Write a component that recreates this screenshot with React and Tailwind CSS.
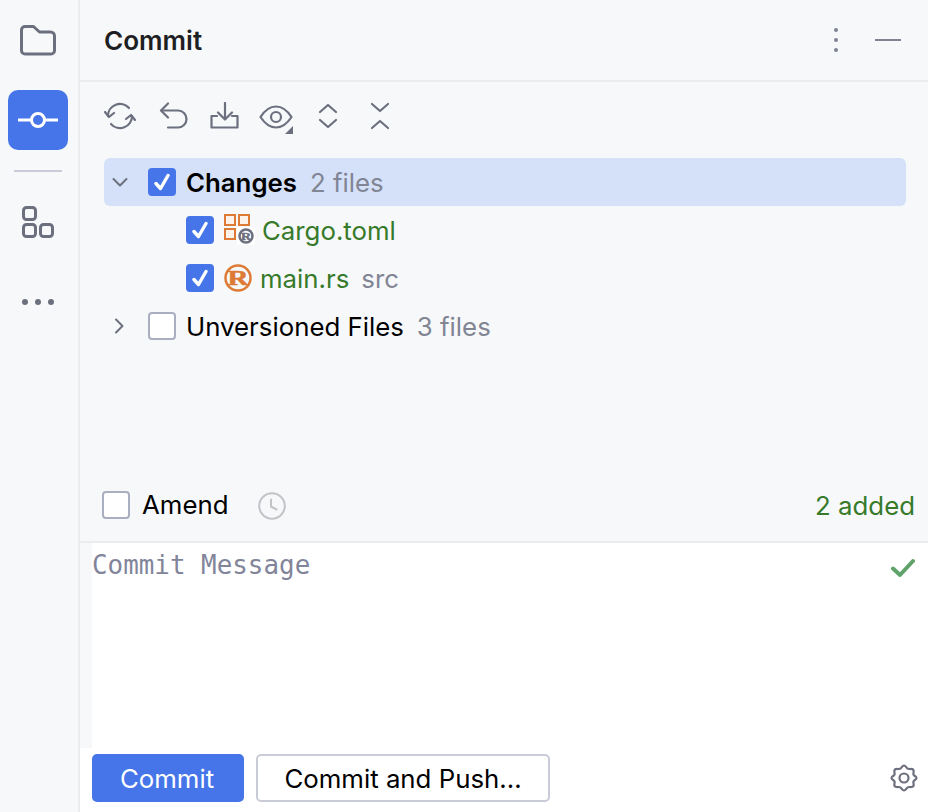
import { Fragment } from 'react'

const Svg = ({ w, h, className = '', children }) => (
  <svg width={w} height={h} viewBox={`0 0 ${w} ${h}`} fill="none" className={`block shrink-0 ${className}`}>
    {children}
  </svg>
)

// Left tool strip
const FolderIcon = () => (
  <Svg w={36} h={32}>
    <path d="M1.500 6a3.500 3.500 0 0 1 3.500-3.500h8.500l6 5.500h11a4 4 0 0 1 4 4v14.500a3.500 3.500 0 0 1-3.500 3.500H5a3.500 3.500 0 0 1-3.500-3.500z" stroke="#6c707e" strokeWidth="3" strokeLinejoin="round" />
  </Svg>
)

const CommitIcon = () => (
  <Svg w={40} h={20}>
    <path d="M0 10h13M27 10h13" stroke="#fff" strokeWidth="3" strokeLinecap="round" />
    <circle cx="20" cy="10" r="6.500" stroke="#fff" strokeWidth="3" />
  </Svg>
)

const PluginsIcon = () => (
  <Svg w={32} h={32}>
    <rect x="1.500" y="1.500" width="12" height="12" rx="3" stroke="#6c707e" strokeWidth="3" />
    <rect x="1.500" y="18.500" width="12" height="12" rx="3" stroke="#6c707e" strokeWidth="3" />
    <rect x="18.500" y="18.500" width="12" height="12" rx="3" stroke="#6c707e" strokeWidth="3" />
  </Svg>
)

// Toolbar
const RefreshIcon = () => (
  <Svg w={32} h={28}>
    <path d="M4 14a12 12 0 0 1 21-8M28 14a12 12 0 0 1-21 8" stroke="#6c707e" strokeWidth="2.200" strokeLinecap="round" />
    <path d="M1 10l4 5 5-4M31 18l-4-5-5 4" stroke="#6c707e" strokeWidth="2.200" strokeLinecap="round" strokeLinejoin="round" />
  </Svg>
)

const RollbackIcon = () => (
  <Svg w={30} h={28}>
    <path d="M9 1.500L2 8.500l7 7" stroke="#6c707e" strokeWidth="2.200" strokeLinecap="round" strokeLinejoin="round" />
    <path d="M2.500 8.500H19a8.500 8.500 0 0 1 0 17H9" stroke="#6c707e" strokeWidth="2.200" strokeLinecap="round" />
  </Svg>
)

const ShelveIcon = () => (
  <Svg w={30} h={28}>
    <path d="M15 1v16M8 10.500l7 7 7-7" stroke="#6c707e" strokeWidth="2.200" strokeLinecap="round" strokeLinejoin="round" />
    <path d="M7 14H1.500v11.500h26V14H22" stroke="#6c707e" strokeWidth="2.200" strokeLinecap="round" strokeLinejoin="round" />
  </Svg>
)

const EyeIcon = () => (
  <Svg w={36} h={34}>
    <path d="M1.500 14C6 7 11 3.500 17 3.500S28 7 32.500 14C28 21 23 24.500 17 24.500S6 21 1.500 14z" stroke="#6c707e" strokeWidth="2.200" strokeLinejoin="round" />
    <circle cx="17" cy="14" r="5" stroke="#6c707e" strokeWidth="2.200" />
    <path d="M26 31l8-8v8z" fill="#6c707e" />
  </Svg>
)

const ExpandIcon = () => (
  <Svg w={20} h={28}>
    <path d="M2 10l8-7 8 7M2 18l8 7 8-7" stroke="#6c707e" strokeWidth="2.200" strokeLinecap="round" strokeLinejoin="round" />
  </Svg>
)

const CollapseIcon = () => (
  <Svg w={20} h={28}>
    <path d="M2 2l8 7 8-7M2 26l8-7 8 7" stroke="#6c707e" strokeWidth="2.200" strokeLinecap="round" strokeLinejoin="round" />
  </Svg>
)

// Tree
const Chevron = ({ open }) => (
  <Svg w={16} h={16}>
    {open ? (
      <path d="M1.500 5l6.500 6.500L14.500 5" stroke="#6c707e" strokeWidth="2" strokeLinecap="round" strokeLinejoin="round" />
    ) : (
      <path d="M5 1.500l6.500 6.500L5 14.500" stroke="#6c707e" strokeWidth="2" strokeLinecap="round" strokeLinejoin="round" />
    )}
  </Svg>
)

const Checkbox = ({ checked }) =>
  checked ? (
    <span className="flex h-7 w-7 shrink-0 items-center justify-center rounded-[4px] bg-[#4575e8]">
      <Svg w={16} h={18}>
        <path d="M2 10.500l4.500 5L14 2.500" stroke="#fff" strokeWidth="3.400" strokeLinecap="round" strokeLinejoin="round" />
      </Svg>
    </span>
  ) : (
    <span className="block h-7 w-7 shrink-0 rounded-[4px] border-2 border-[#a9aec0] bg-white" />
  )

const RBadge = ({ cx, cy, r, color, bg, size, ring, width }) => (
  <>
    <circle cx={cx} cy={cy} r={r} fill={bg} stroke={color} strokeWidth={ring} />
    <text
      x={cx - width / 2}
      y={cy + size * 0.33}
      textLength={width}
      lengthAdjust="spacingAndGlyphs"
      fontFamily="'Liberation Serif', serif"
      fontWeight="700"
      fontSize={size}
      fill={color}
      stroke={color}
      strokeWidth="0.500"
    >
      R
    </text>
  </>
)

const CargoIcon = () => (
  <Svg w={32} h={32}>
    <rect x="1" y="1" width="10" height="10" fill="#fdf2e9" stroke="#dd7a35" strokeWidth="2" />
    <rect x="15" y="1" width="10" height="10" fill="#fdf2e9" stroke="#dd7a35" strokeWidth="2" />
    <rect x="1" y="15" width="10" height="10" fill="#fdf2e9" stroke="#dd7a35" strokeWidth="2" />
    <rect x="13" y="13" width="18" height="18" fill="#fff" />
    <RBadge cx={22} cy={22} r={6.500} color="#6c707e" bg="#fff" size={11} ring={2.500} width={10} />
  </Svg>
)

const RustIcon = () => (
  <Svg w={28} h={28}>
    <RBadge cx={14} cy={14} r={12.500} color="#dd7a35" bg="#f7f8fa" size={20} ring={2.500} width={21} />
  </Svg>
)

const ClockIcon = () => (
  <Svg w={28} h={28}>
    <circle cx="14" cy="14" r="12.800" stroke="#c2c3c7" strokeWidth="2" />
    <path d="M13 7.500v7l5.500 3" stroke="#c2c3c7" strokeWidth="2" strokeLinecap="round" strokeLinejoin="round" />
  </Svg>
)

const GearIcon = () => (
  <Svg w={28} h={28}>
    <path d="M14 1.500c1.800 0 2.300 2.700 4 3.300 1.700.7 4-.6 5.300.9 1 1.200-.3 3.300.2 5 .5 1.300 3 1.500 3 3.300s-2.500 2-3 3.300c-.5 1.700.8 3.800-.2 5-1.300 1.500-3.600.2-5.300.9-1.700.6-2.200 3.300-4 3.300s-2.300-2.700-4-3.300c-1.700-.7-4 .6-5.300-.9-1-1.200.3-3.300-.2-5-.5-1.300-3-1.500-3-3.300s2.500-2 3-3.300c.5-1.700-.8-3.800.2-5C6 4.200 8.300 5.500 10 4.800c1.700-.6 2.200-3.300 4-3.300z" stroke="#6c707e" strokeWidth="2.200" strokeLinejoin="round" />
    <circle cx="14" cy="14" r="4.500" stroke="#6c707e" strokeWidth="2.200" />
  </Svg>
)

const toolbarItems = [
  { Icon: RefreshIcon, className: 'ml-0' },
  { Icon: RollbackIcon, className: 'ml-[23px]' },
  { Icon: ShelveIcon, className: 'ml-[21px]' },
  { Icon: EyeIcon, className: 'ml-[19px] mt-[1px]' },
  { Icon: ExpandIcon, className: 'ml-[23px]' },
  { Icon: CollapseIcon, className: 'ml-[32px]' },
]

export default function App() {
  return (
    <div className="flex h-[812px] w-[928px] overflow-hidden bg-[#f7f8fa] font-['Inter',sans-serif] text-[25.800px] text-black">
      {/* Tool strip */}
      <aside className="flex w-[80px] shrink-0 flex-col items-center border-r-2 border-[#ebecf0] pr-[2px]">
        <div className="mt-[24px]"><FolderIcon /></div>
        <button className="mt-[34px] flex h-[60px] w-[60px] items-center justify-center rounded-[10px] bg-[#4575e8]">
          <CommitIcon />
        </button>
        <div className="mt-[20px] h-[2px] w-[48px] bg-[#c9ccd6]" />
        <div className="mt-[34px]"><PluginsIcon /></div>
        <div className="mt-[61px] flex gap-[7px]">
          <span className="h-[6px] w-[6px] rounded-full bg-[#6c707e]" />
          <span className="h-[6px] w-[6px] rounded-full bg-[#6c707e]" />
          <span className="h-[6px] w-[6px] rounded-full bg-[#6c707e]" />
        </div>
      </aside>

      <main className="flex min-w-0 flex-1 flex-col">
        {/* Header */}
        <header className="flex h-[82px] shrink-0 items-center border-b-2 border-[#ebecf0] pl-[24px] pr-[27px]">
          <h1 className="mt-[2px] flex-1 text-[26.100px] leading-none font-semibold text-[#1e1f22]">Commit</h1>
          <div className="mr-[37px] flex flex-col gap-[6px]">
            <span className="h-[4px] w-[4px] rounded-full bg-[#7f8290]" />
            <span className="h-[4px] w-[4px] rounded-full bg-[#7f8290]" />
            <span className="h-[4px] w-[4px] rounded-full bg-[#7f8290]" />
          </div>
          <span className="h-[2px] w-[26px] bg-[#7f8290]" />
        </header>

        {/* Toolbar */}
        <div className="flex h-[76px] shrink-0 items-start pl-[24px] pt-[20px]">
          {toolbarItems.map(({ Icon, className }, i) => (
            <Fragment key={i}>
              <span className={className}><Icon /></span>
            </Fragment>
          ))}
        </div>

        {/* Changes tree */}
        <div className="ml-[24px] mr-[22px] flex shrink-0 flex-col">
          <div className="flex h-[48px] items-center rounded-[6px] bg-[#d5e1f9]">
            <span className="ml-[8px]"><Chevron open /></span>
            <span className="ml-[20px]"><Checkbox checked /></span>
            <span className="ml-[10px] mt-[2px] font-semibold">Changes</span>
            <span className="ml-[13px] mt-[2px] text-[#818594]">2 files</span>
          </div>
          <div className="flex h-[48px] items-center pl-[82px]">
            <Checkbox checked />
            <span className="ml-[10px]"><CargoIcon /></span>
            <span className="ml-[6px] mt-[2px] text-[#367a2a]">Cargo.toml</span>
          </div>
          <div className="flex h-[48px] items-center pl-[82px]">
            <Checkbox checked />
            <span className="ml-[10px]"><RustIcon /></span>
            <span className="ml-[8px] mt-[2px] text-[#367a2a]">main.rs</span>
            <span className="ml-[12px] mt-[2px] text-[#818594]">src</span>
          </div>
          <div className="flex h-[48px] items-center">
            <span className="ml-[7px]"><Chevron /></span>
            <span className="ml-[21px]"><Checkbox /></span>
            <span className="ml-[10px] mt-[2px]">Unversioned Files</span>
            <span className="ml-[13px] mt-[2px] text-[#818594]">3 files</span>
          </div>
        </div>

        <div className="flex-1" />

        {/* Amend row */}
        <div className="flex h-[50px] shrink-0 items-center pb-[22px] pl-[22px] pr-[13px]">
          <Checkbox />
          <span className="ml-[12px]">Amend</span>
          <span className="ml-[30px] mt-[2px]"><ClockIcon /></span>
          <span className="ml-auto mt-[2px] text-[#367a2a]">2 added</span>
        </div>

        {/* Message editor */}
        <div className="flex h-[207px] shrink-0 border-t-2 border-[#ebecf0]">
          <div className="w-[12px] shrink-0 bg-[#f7f8fa]" />
          <div className="flex flex-1 items-start justify-between bg-white pr-[13px]">
            <span className="mt-[6px] font-['DejaVu_Sans_Mono',monospace] text-[25.900px] leading-[32px] text-[#82859a]">Commit Message</span>
            <span className="mt-[15px]">
              <Svg w={24} h={20}>
                <path d="M2 10.500l7 6.500L22 3" stroke="#5fa36b" strokeWidth="4" strokeLinecap="round" strokeLinejoin="round" />
              </Svg>
            </span>
          </div>
        </div>

        {/* Actions */}
        <div className="flex h-[64px] shrink-0 items-start bg-white pl-[12px] pr-[10px] pt-[6px]">
          <button className="flex h-[48px] w-[152px] items-center justify-center rounded-[5px] bg-[#4575e8] pt-[2px] pr-[2px] text-white">Commit</button>
          <button className="ml-[12px] flex h-[48px] w-[294px] items-center justify-center rounded-[5px] border-2 border-[#c9ccd6] bg-white pt-[2px]">Commit and Push...</button>
          <span className="ml-auto mt-[10px]"><GearIcon /></span>
        </div>
      </main>
    </div>
  )
}
